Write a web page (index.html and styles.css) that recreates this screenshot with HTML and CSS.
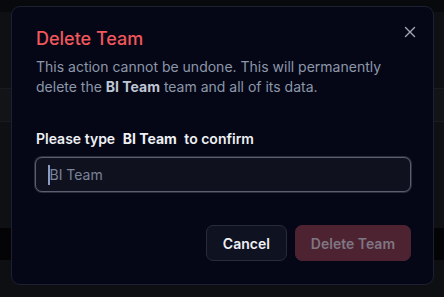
FILE: index.html
```html
<!DOCTYPE html>
<html lang="en">
<head>
<meta charset="utf-8">
<title>Delete Team</title>
<link rel="stylesheet" href="styles.css">
</head>
<body>
<div class="app">
  <div class="topbar"></div>
  <div class="band band-a"></div>
  <div class="band band-row"></div>
  <div class="band band-b"></div>
  <div class="band band-dark"></div>
  <div class="band band-c"></div>
</div>

<div class="modal" role="dialog" aria-labelledby="dlg-title">
  <button class="close" aria-label="Close">
    <svg width="16" height="16" viewBox="0 0 16 16" fill="none" stroke="currentColor" stroke-width="1.4" stroke-linecap="round"><path d="M3.5 3.5L12.5 12.5M12.5 3.5L3.5 12.5"/></svg>
  </button>
  <h2 id="dlg-title" class="title">Delete Team</h2>
  <p class="desc">This action cannot be undone. This will permanently delete the <strong>BI Team</strong> team and all of its data.</p>
  <div class="form">
    <div class="label">Please type <span class="code">BI Team</span> to confirm</div>
    <label class="field">
      <span class="caret"></span>
      <input class="input" type="text" placeholder="BI Team">
    </label>
  </div>
  <div class="actions">
    <button class="btn btn-cancel">Cancel</button>
    <button class="btn btn-danger" disabled>Delete Team</button>
  </div>
</div>
</body>
</html>
```

FILE: styles.css
```css
* { box-sizing: border-box; }
html, body { margin: 0; padding: 0; }
body {
  width: 444px;
  height: 297px;
  overflow: hidden;
  background: #0e0f13;
  font-family: Inter, "Noto Sans", sans-serif;
  position: relative;
}
.app {
  display: flex;
  flex-direction: column;
  height: 297px;
}
.topbar { height: 12px; background: #08090c; }
.band-a { height: 76px; background: #0f1014; }
.band-row { height: 34px; background: #131418; border-top: 1px solid #1a1b20; border-bottom: 1px solid #1a1b20; }
.band-b { height: 106px; background: #0f1014; }
.band-dark { height: 32px; background: #040406; }
.band-c { flex: 1; background: #0e0f13; }

.modal {
  position: absolute;
  left: 11px;
  top: 6px;
  width: 423px;
  background: #050716;
  border: 1px solid #1d2030;
  border-radius: 9px;
  padding: 20px 22px 23px 24px;
  display: flex;
  flex-direction: column;
}
.close {
  position: absolute;
  top: 17px;
  right: 15px;
  width: 16px;
  height: 16px;
  padding: 0;
  border: 0;
  background: none;
  color: #a3a8b6;
  display: flex;
}
.title {
  margin: 0;
  font-size: 18px;
  line-height: 24px;
  font-weight: 500;
  color: #f2575c;
}
.desc {
  margin: 6px 0 0;
  font-size: 14px;
  line-height: 20px;
  color: #8d97aa;
}
.desc strong { color: #bfc6d3; font-weight: 700; }
.form {
  margin-top: 32px;
  display: flex;
  flex-direction: column;
}
.label {
  font-size: 14px;
  line-height: 20px;
  font-weight: 600;
  color: #eef0f4;
}
.code { padding: 0 4px; font-weight: 700; }
.field {
  margin: 8px 0 0 -1px;
  height: 35px;
  display: flex;
  align-items: center;
  padding: 0 12px;
  background: #0f111f;
  border: 1px solid #5a5e6f;
  border-radius: 7px;
  box-shadow: 0 0 0 1px #2a2d3a;
}
.caret {
  width: 1.5px;
  height: 20px;
  background: #8b9bc4;
  flex: none;
}
.input {
  flex: 1;
  min-width: 0;
  border: 0;
  outline: none;
  background: transparent;
  padding: 0;
  font-family: inherit;
  font-size: 14px;
  color: #e5e7eb;
}
.input::placeholder { color: #7a8398; }
.actions {
  margin-top: 33px;
  display: flex;
  justify-content: flex-end;
  gap: 8px;
}
.btn {
  height: 36px;
  padding: 0 16px;
  border-radius: 7px;
  font-family: inherit;
  font-size: 14px;
  font-weight: 600;
}
.btn-cancel {
  background: #0f1220;
  border: 1px solid #282b3a;
  color: #eef0f4;
}
.btn-danger {
  padding: 0 15px;
  background: #4e2331;
  border: 1px solid #4e2331;
  color: #7f7683;
}
```
